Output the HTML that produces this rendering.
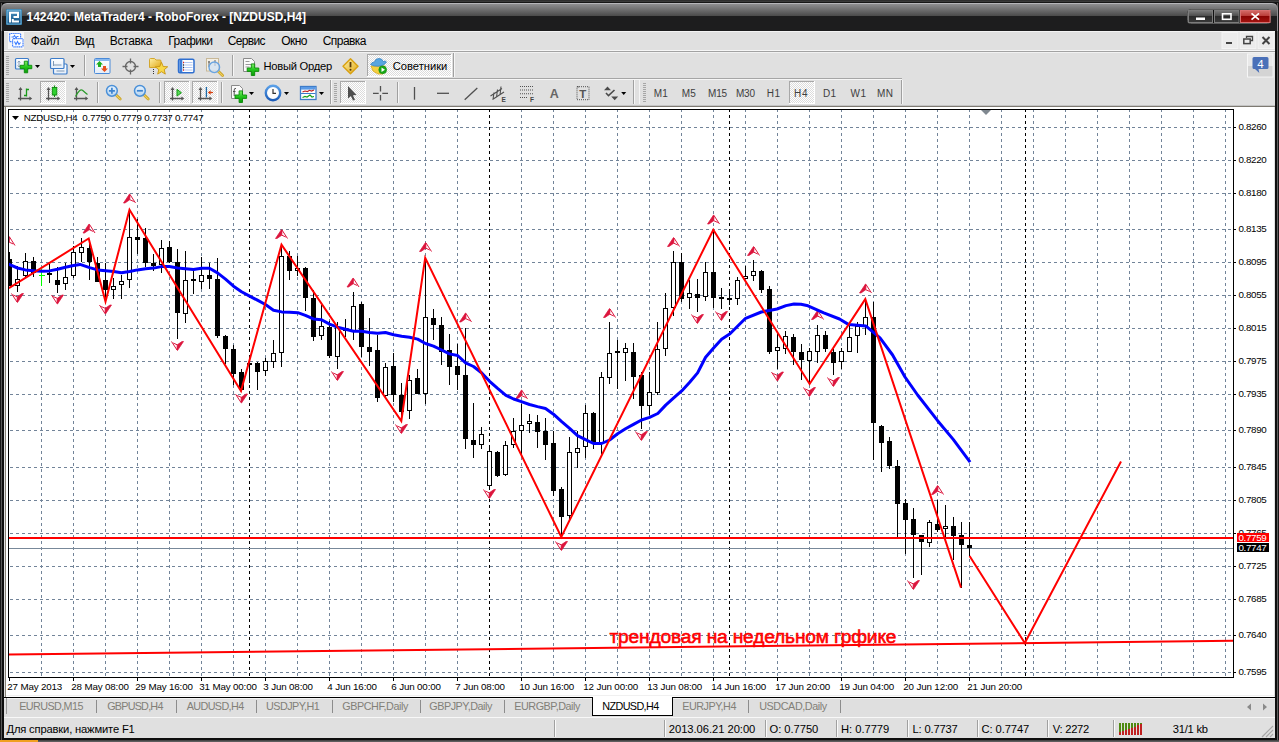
<!DOCTYPE html>
<html lang="ru">
<head>
<meta charset="utf-8">
<title>142420: MetaTrader4 - RoboForex - [NZDUSD,H4]</title>
<style>
*{box-sizing:border-box;margin:0;padding:0}
html,body{width:1279px;height:742px;overflow:hidden;background:#1c1c1c}
body{position:relative;font-family:"Liberation Sans",Arial,sans-serif;font-size:11px;color:#000}
.abs{position:absolute}
#frame{left:0;top:0;width:1279px;height:742px;background:#0e0e0e;box-shadow:inset 1px 0 0 #161616,inset 2px 0 0 #585858,inset -1px 0 0 #161616,inset -2px 0 0 #5e5e5e}
#topedge{left:0;top:0;width:1279px;height:3px;background:linear-gradient(#2e2e2e 0,#2e2e2e 1px,#3a3a3a 1px,#3a3a3a 2px,#161616 2px)}
#botedge{left:0;top:740px;width:1279px;height:2px;background:linear-gradient(#3a3a3a,#6a6a6a)}
#botorange{left:0;top:740px;width:38px;height:2px;background:#f0a020}
#titlebar{left:1px;top:3px;width:1277px;height:28px;border-radius:6px 6px 0 0;border:1px solid #8e8e92;border-top-color:#b6b6ba;border-bottom:none;background:linear-gradient(#8e8e90 0,#4a4a4a 12px,#1d1d1e 12px,#1d1d1e 100%)}
#title{left:27px;top:9px;font-weight:bold;font-size:12.5px;color:#fff;white-space:nowrap;letter-spacing:-0.1px;text-shadow:0 0 2px #000}
#logo{left:7px;top:9px;width:15px;height:15px;background:linear-gradient(#3f86b5,#0d4d7e);border:1px solid #6fa6c8}
.capbtn{top:10px;height:13px;border:1px solid #555;background:linear-gradient(#6a6a6a,#3a3a3a 50%,#2a2a2a 50%,#333)}
#client{left:4px;top:31px;width:1271px;height:707px;background:#e0e0e0}
#menubar{left:4px;top:31px;width:1271px;height:20px;background:#e0e0e0;border-top:1px solid #f4f4f4;border-bottom:1px solid #f6f6f6}
.mi{position:absolute;top:35px;font-size:11.5px;white-space:nowrap}
#tb1{left:4px;top:51px;width:1271px;height:28px;background:#e0e0e0;border-top:1px solid #a2a2a2;box-shadow:inset 0 1px 0 #f2f2f2}
#tb2{left:4px;top:79px;width:1271px;height:26px;background:#e0e0e0}
#tbsep{left:4px;top:78px;width:898px;height:2px;background:#f6f6f6;border-top:1px solid #a6a6a6}
#tbbottom{left:4px;top:105px;width:1271px;height:2px;background:#c4c4c4;border-bottom:1px solid #7e7a72}
.pressed{position:absolute;border:1px solid #fff;border-top-color:#b8b8b8;border-left-color:#b8b8b8;background:#ececec}
.grip{position:absolute;width:3px;height:20px;background:repeating-linear-gradient(#b0b0b0 0,#b0b0b0 1px,transparent 1px,transparent 2px)}
.vsep{position:absolute;width:2px;height:20px;border-left:1px solid #a8a8a8;border-right:1px solid #f4f4f4}
.tf{position:absolute;top:87px;font-size:10.5px;color:#3c3c3c;white-space:nowrap}
.tbt{position:absolute;font-size:11px;white-space:nowrap}
#tabbar{left:4px;top:697px;width:1271px;height:20px;background:#dfdfdf;border-top:1px solid #000;box-shadow:inset 0 1px 0 #f4f4f4}
.tab{position:absolute;top:701px;font-size:10.4px;color:#7b7b7b;white-space:nowrap}
.tsep{position:absolute;top:700px;width:1px;height:13px;background:#8a8a8a}
#acttab{left:592px;top:697px;width:81px;height:19px;background:#fff;border:1px solid #000;border-top:none}
#status{left:4px;top:717px;width:1271px;height:21px;background:#e0e0e0;border-top:1px solid #f8f8f8}
.st{position:absolute;top:722px;font-size:10.4px;white-space:nowrap}
.ssep{position:absolute;top:720px;width:2px;height:17px;border-left:1px solid #a0a0a0;border-right:1px solid #fafafa}
svg{display:block}
</style>
</head>
<body>
<div id="frame" class="abs"></div>
<div id="topedge" class="abs"></div>
<div id="botedge" class="abs"></div>
<div id="botorange" class="abs"></div>
<div id="titlebar" class="abs"></div>
<!--CAPTION-->
<div id="client" class="abs"></div>
<div id="menubar" class="abs"></div>
<!--MENU-->
<div id="tb1" class="abs"></div>
<div id="tb2" class="abs"></div>
<div id="tbsep" class="abs"></div>
<div id="tbbottom" class="abs"></div>
<!--TOOLBAR-->
<svg id="chart" width="1271" height="590" viewBox="4 107 1271 590" shape-rendering="crispEdges" style="position:absolute;left:4px;top:107px">
<rect x="4" y="107" width="1271" height="590" fill="#fff"/>
<g stroke="#728499" stroke-width="1" stroke-dasharray="3 3" fill="none">
<path d="M10 127.5 H1233"/>
<path d="M10 160.5 H1233"/>
<path d="M10 193.5 H1233"/>
<path d="M10 229.5 H1233"/>
<path d="M10 262.5 H1233"/>
<path d="M10 295.5 H1233"/>
<path d="M10 328.5 H1233"/>
<path d="M10 361.5 H1233"/>
<path d="M10 394.5 H1233"/>
<path d="M10 430.5 H1233"/>
<path d="M10 467.5 H1233"/>
<path d="M10 500.5 H1233"/>
<path d="M10 533.5 H1233"/>
<path d="M10 566.5 H1233"/>
<path d="M10 599.5 H1233"/>
<path d="M10 635.5 H1233"/>
<path d="M10 672.5 H1233"/>
<path d="M41.5 109 V677"/>
<path d="M73.5 109 V677"/>
<path d="M105.5 109 V677"/>
<path d="M137.5 109 V677"/>
<path d="M169.5 109 V677"/>
<path d="M201.5 109 V677"/>
<path d="M233.5 109 V677"/>
<path d="M265.5 109 V677"/>
<path d="M297.5 109 V677"/>
<path d="M329.5 109 V677"/>
<path d="M361.5 109 V677"/>
<path d="M393.5 109 V677"/>
<path d="M425.5 109 V677"/>
<path d="M457.5 109 V677"/>
<path d="M489.5 109 V677"/>
<path d="M521.5 109 V677"/>
<path d="M553.5 109 V677"/>
<path d="M585.5 109 V677"/>
<path d="M617.5 109 V677"/>
<path d="M649.5 109 V677"/>
<path d="M681.5 109 V677"/>
<path d="M713.5 109 V677"/>
<path d="M745.5 109 V677"/>
<path d="M777.5 109 V677"/>
<path d="M809.5 109 V677"/>
<path d="M841.5 109 V677"/>
<path d="M873.5 109 V677"/>
<path d="M905.5 109 V677"/>
<path d="M937.5 109 V677"/>
<path d="M969.5 109 V677"/>
<path d="M1001.5 109 V677"/>
<path d="M1033.5 109 V677"/>
<path d="M1065.5 109 V677"/>
<path d="M1097.5 109 V677"/>
<path d="M1129.5 109 V677"/>
<path d="M1161.5 109 V677"/>
<path d="M1193.5 109 V677"/>
<path d="M1225.5 109 V677"/>
</g>
<g stroke="#000" stroke-width="1" stroke-dasharray="3 3" fill="none">
<path d="M249.5 109 V677"/>
<path d="M489.5 109 V677"/>
<path d="M729.5 109 V677"/>
<path d="M1025.5 109 V677"/>
</g>
<path d="M9 548.5 H1233" stroke="#778899" stroke-width="1"/>
<g stroke="#000" stroke-width="1">
<path d="M9.5 252 V286"/>
<rect x="7.5" y="259.5" width="4" height="26" fill="#000"/>
<path d="M17.5 266 V292"/>
<rect x="15.5" y="279.5" width="4" height="6" fill="#fff"/>
<path d="M25.5 253 V277"/>
<rect x="23.5" y="261.5" width="4" height="14" fill="#fff"/>
<path d="M33.5 257 V277"/>
<rect x="31.5" y="261.5" width="4" height="11" fill="#000"/>
<path d="M41.5 269 V286 M38.5 275.5 H44.5" stroke="#00ff00"/>
<path d="M49.5 264 V283"/>
<rect x="47" y="273" width="5" height="2" fill="#000" stroke="none"/>
<path d="M57.5 267 V293"/>
<rect x="55.5" y="280.5" width="4" height="4" fill="#000"/>
<path d="M65.5 263 V290"/>
<rect x="63.5" y="277.5" width="4" height="6" fill="#fff"/>
<path d="M73.5 246 V278"/>
<rect x="71.5" y="252.5" width="4" height="23" fill="#fff"/>
<path d="M81.5 238 V262"/>
<rect x="79.5" y="247.5" width="4" height="5" fill="#fff"/>
<path d="M89.5 239 V280"/>
<rect x="87.5" y="248.5" width="4" height="13" fill="#000"/>
<path d="M97.5 257 V282"/>
<rect x="95.5" y="263.5" width="4" height="18" fill="#000"/>
<path d="M105.5 263 V302"/>
<rect x="103.5" y="280.5" width="4" height="9" fill="#000"/>
<path d="M113.5 278 V299"/>
<rect x="111.5" y="286.5" width="4" height="3" fill="#fff"/>
<path d="M121.5 275 V299"/>
<rect x="119.5" y="281.5" width="4" height="3" fill="#fff"/>
<path d="M129.5 210 V288"/>
<rect x="127.5" y="237.5" width="4" height="42" fill="#fff"/>
<path d="M137.5 219 V254"/>
<rect x="135.5" y="237.5" width="4" height="2" fill="#000"/>
<path d="M145.5 228 V267"/>
<rect x="143.5" y="238.5" width="4" height="24" fill="#000"/>
<path d="M153.5 254 V271"/>
<rect x="151.5" y="263.5" width="4" height="2" fill="#000"/>
<path d="M161.5 240 V273"/>
<rect x="159.5" y="248.5" width="4" height="16" fill="#fff"/>
<path d="M169.5 241 V263"/>
<rect x="167.5" y="247.5" width="4" height="14" fill="#000"/>
<path d="M177.5 249 V339"/>
<rect x="175.5" y="262.5" width="4" height="50" fill="#000"/>
<path d="M185.5 251 V323"/>
<rect x="183.5" y="280.5" width="4" height="33" fill="#fff"/>
<path d="M193.5 268 V294"/>
<rect x="191" y="279" width="5" height="2" fill="#000" stroke="none"/>
<path d="M201.5 257 V289"/>
<rect x="199.5" y="275.5" width="4" height="6" fill="#fff"/>
<path d="M209.5 263 V289"/>
<rect x="207.5" y="275.5" width="4" height="3" fill="#000"/>
<path d="M217.5 258 V338"/>
<rect x="215.5" y="279.5" width="4" height="56" fill="#000"/>
<path d="M225.5 335 V364"/>
<rect x="223.5" y="336.5" width="4" height="12" fill="#000"/>
<path d="M233.5 345 V385"/>
<rect x="231.5" y="349.5" width="4" height="24" fill="#000"/>
<path d="M241.5 369 V391"/>
<rect x="239.5" y="372.5" width="4" height="17" fill="#000"/>
<path d="M249.5 356 V383"/>
<rect x="247" y="363" width="5" height="2" fill="#000" stroke="none"/>
<path d="M257.5 362 V390"/>
<rect x="255.5" y="363.5" width="4" height="8" fill="#000"/>
<path d="M265.5 358 V376"/>
<rect x="263.5" y="361.5" width="4" height="9" fill="#fff"/>
<path d="M273.5 340 V368"/>
<rect x="271.5" y="353.5" width="4" height="8" fill="#fff"/>
<path d="M281.5 245 V367"/>
<rect x="279.5" y="256.5" width="4" height="96" fill="#fff"/>
<path d="M289.5 251 V280"/>
<rect x="287.5" y="256.5" width="4" height="14" fill="#000"/>
<path d="M297.5 256 V276"/>
<rect x="295.5" y="268.5" width="4" height="2" fill="#fff"/>
<path d="M305.5 267 V311"/>
<rect x="303.5" y="268.5" width="4" height="29" fill="#000"/>
<path d="M313.5 290 V341"/>
<rect x="311.5" y="298.5" width="4" height="38" fill="#000"/>
<path d="M321.5 305 V340"/>
<rect x="319.5" y="326.5" width="4" height="9" fill="#fff"/>
<path d="M329.5 321 V358"/>
<rect x="327.5" y="327.5" width="4" height="28" fill="#000"/>
<path d="M337.5 322 V369"/>
<rect x="335.5" y="327.5" width="4" height="29" fill="#fff"/>
<path d="M345.5 319 V337"/>
<rect x="343.5" y="328.5" width="4" height="2" fill="#000"/>
<path d="M353.5 292 V340"/>
<rect x="351.5" y="306.5" width="4" height="24" fill="#fff"/>
<path d="M361.5 302 V357"/>
<rect x="359.5" y="304.5" width="4" height="42" fill="#000"/>
<path d="M369.5 318 V366"/>
<rect x="367.5" y="347.5" width="4" height="4" fill="#000"/>
<path d="M377.5 335 V402"/>
<rect x="375.5" y="350.5" width="4" height="47" fill="#000"/>
<path d="M385.5 363 V397"/>
<rect x="383.5" y="367.5" width="4" height="28" fill="#fff"/>
<path d="M393.5 353 V402"/>
<rect x="391.5" y="366.5" width="4" height="28" fill="#000"/>
<path d="M401.5 383 V421"/>
<rect x="399.5" y="395.5" width="4" height="16" fill="#000"/>
<path d="M409.5 375 V419"/>
<rect x="407.5" y="380.5" width="4" height="30" fill="#fff"/>
<path d="M417.5 369 V394"/>
<rect x="415.5" y="378.5" width="4" height="15" fill="#000"/>
<path d="M425.5 258 V404"/>
<rect x="423.5" y="317.5" width="4" height="76" fill="#fff"/>
<path d="M433.5 309 V340"/>
<rect x="431.5" y="318.5" width="4" height="6" fill="#000"/>
<path d="M441.5 317 V365"/>
<rect x="439.5" y="325.5" width="4" height="26" fill="#000"/>
<path d="M449.5 334 V385"/>
<rect x="447.5" y="350.5" width="4" height="16" fill="#000"/>
<path d="M457.5 344 V390"/>
<rect x="455.5" y="366.5" width="4" height="8" fill="#000"/>
<path d="M465.5 328 V449"/>
<rect x="463.5" y="375.5" width="4" height="63" fill="#000"/>
<path d="M473.5 403 V458"/>
<rect x="471.5" y="440.5" width="4" height="4" fill="#000"/>
<path d="M481.5 427 V449"/>
<rect x="479.5" y="434.5" width="4" height="10" fill="#fff"/>
<path d="M489.5 446 V490"/>
<rect x="487.5" y="451.5" width="4" height="34" fill="#fff"/>
<path d="M497.5 451 V477"/>
<rect x="495.5" y="452.5" width="4" height="23" fill="#000"/>
<path d="M505.5 441 V476"/>
<rect x="503.5" y="445.5" width="4" height="29" fill="#fff"/>
<path d="M513.5 418 V448"/>
<rect x="511.5" y="431.5" width="4" height="13" fill="#fff"/>
<path d="M521.5 404 V454"/>
<rect x="519.5" y="425.5" width="4" height="5" fill="#fff"/>
<path d="M529.5 414 V433"/>
<rect x="527.5" y="421.5" width="4" height="2" fill="#fff"/>
<path d="M537.5 415 V448"/>
<rect x="535.5" y="422.5" width="4" height="9" fill="#000"/>
<path d="M545.5 418 V460"/>
<rect x="543.5" y="431.5" width="4" height="13" fill="#000"/>
<path d="M553.5 431 V496"/>
<rect x="551.5" y="443.5" width="4" height="47" fill="#000"/>
<path d="M561.5 487 V537"/>
<rect x="559.5" y="489.5" width="4" height="27" fill="#000"/>
<path d="M569.5 437 V520"/>
<rect x="567.5" y="452.5" width="4" height="63" fill="#fff"/>
<path d="M577.5 431 V468"/>
<rect x="575.5" y="448.5" width="4" height="4" fill="#fff"/>
<path d="M585.5 405 V458"/>
<rect x="583.5" y="413.5" width="4" height="33" fill="#fff"/>
<path d="M593.5 412 V449"/>
<rect x="591.5" y="413.5" width="4" height="29" fill="#000"/>
<path d="M601.5 372 V454"/>
<rect x="599.5" y="377.5" width="4" height="66" fill="#fff"/>
<path d="M609.5 322 V384"/>
<rect x="607.5" y="353.5" width="4" height="24" fill="#fff"/>
<path d="M617.5 340 V389"/>
<rect x="615" y="351" width="5" height="2" fill="#000" stroke="none"/>
<path d="M625.5 343 V381"/>
<rect x="623.5" y="348.5" width="4" height="4" fill="#fff"/>
<path d="M633.5 343 V399"/>
<rect x="631.5" y="352.5" width="4" height="24" fill="#000"/>
<path d="M641.5 372 V429"/>
<rect x="639.5" y="375.5" width="4" height="30" fill="#000"/>
<path d="M649.5 372 V415"/>
<rect x="647.5" y="392.5" width="4" height="13" fill="#fff"/>
<path d="M657.5 322 V395"/>
<rect x="655.5" y="349.5" width="4" height="43" fill="#fff"/>
<path d="M665.5 293 V356"/>
<rect x="663.5" y="308.5" width="4" height="40" fill="#fff"/>
<path d="M673.5 251 V316"/>
<rect x="671.5" y="262.5" width="4" height="45" fill="#fff"/>
<path d="M681.5 253 V302"/>
<rect x="679.5" y="262.5" width="4" height="36" fill="#000"/>
<path d="M689.5 280 V309"/>
<rect x="687.5" y="293.5" width="4" height="4" fill="#fff"/>
<path d="M697.5 279 V312"/>
<rect x="695.5" y="294.5" width="4" height="3" fill="#000"/>
<path d="M705.5 262 V301"/>
<rect x="703.5" y="272.5" width="4" height="24" fill="#fff"/>
<path d="M713.5 230 V308"/>
<rect x="711.5" y="272.5" width="4" height="25" fill="#000"/>
<path d="M721.5 288 V309"/>
<rect x="719" y="297" width="5" height="2" fill="#000" stroke="none"/>
<path d="M729.5 289 V305"/>
<rect x="727" y="298" width="5" height="2" fill="#000" stroke="none"/>
<path d="M737.5 277 V305"/>
<rect x="735.5" y="280.5" width="4" height="18" fill="#fff"/>
<path d="M745.5 266 V279"/>
<rect x="743.5" y="276.5" width="4" height="2" fill="#fff"/>
<path d="M753.5 260 V281"/>
<rect x="751.5" y="271.5" width="4" height="4" fill="#fff"/>
<path d="M761.5 270 V293"/>
<rect x="759.5" y="271.5" width="4" height="18" fill="#000"/>
<path d="M769.5 286 V354"/>
<rect x="767.5" y="289.5" width="4" height="62" fill="#000"/>
<path d="M777.5 333 V369"/>
<rect x="775.5" y="347.5" width="4" height="3" fill="#fff"/>
<path d="M785.5 331 V354"/>
<rect x="783.5" y="336.5" width="4" height="12" fill="#fff"/>
<path d="M793.5 334 V365"/>
<rect x="791.5" y="337.5" width="4" height="14" fill="#000"/>
<path d="M801.5 344 V380"/>
<rect x="799.5" y="352.5" width="4" height="7" fill="#000"/>
<path d="M809.5 348 V384"/>
<rect x="807.5" y="351.5" width="4" height="9" fill="#fff"/>
<path d="M817.5 325 V363"/>
<rect x="815.5" y="335.5" width="4" height="16" fill="#fff"/>
<path d="M825.5 331 V352"/>
<rect x="823.5" y="335.5" width="4" height="13" fill="#000"/>
<path d="M833.5 349 V375"/>
<rect x="831.5" y="352.5" width="4" height="10" fill="#000"/>
<path d="M841.5 348 V369"/>
<rect x="839.5" y="351.5" width="4" height="10" fill="#fff"/>
<path d="M849.5 325 V352"/>
<rect x="847.5" y="337.5" width="4" height="14" fill="#fff"/>
<path d="M857.5 322 V353"/>
<rect x="855.5" y="326.5" width="4" height="9" fill="#fff"/>
<path d="M865.5 300 V335"/>
<rect x="863.5" y="317.5" width="4" height="8" fill="#fff"/>
<path d="M873.5 302 V460"/>
<rect x="871.5" y="317.5" width="4" height="105" fill="#000"/>
<path d="M881.5 425 V472"/>
<rect x="879.5" y="426.5" width="4" height="16" fill="#000"/>
<path d="M889.5 437 V469"/>
<rect x="887.5" y="441.5" width="4" height="24" fill="#000"/>
<path d="M897.5 460 V537"/>
<rect x="895.5" y="466.5" width="4" height="37" fill="#000"/>
<path d="M905.5 499 V554"/>
<rect x="903.5" y="503.5" width="4" height="16" fill="#000"/>
<path d="M913.5 508 V578"/>
<rect x="911.5" y="519.5" width="4" height="15" fill="#000"/>
<path d="M921.5 535 V575"/>
<rect x="919.5" y="535.5" width="4" height="6" fill="#000"/>
<path d="M929.5 520 V547"/>
<rect x="927.5" y="522.5" width="4" height="20" fill="#fff"/>
<path d="M937.5 500 V532"/>
<rect x="935.5" y="524.5" width="4" height="5" fill="#000"/>
<path d="M945.5 505 V537"/>
<rect x="943.5" y="526.5" width="4" height="2" fill="#fff"/>
<path d="M953.5 517 V560"/>
<rect x="951.5" y="526.5" width="4" height="9" fill="#000"/>
<path d="M961.5 522 V588"/>
<rect x="959.5" y="535.5" width="4" height="9" fill="#000"/>
<path d="M969.5 522 V556"/>
<rect x="967.5" y="545.5" width="4" height="2" fill="#000"/>
</g>
<path d="M9 538 H1233" stroke="#ff0000" stroke-width="2"/>
<g shape-rendering="auto">
<g transform="translate(9 241)"><path d="M0 -4.5 L-6 4.5 L-4.5 4.5 L0.300 1.200 L0.600 -4 Z" fill="#dc143c" stroke="#dc143c" stroke-width="0.700" stroke-linejoin="round"/><path d="M0.500 -4 L6 4.500 M0.300 1.200 L4.300 3" stroke="#dc143c" stroke-width="1" fill="none" shape-rendering="auto"/></g>
<g transform="translate(89 228.5)"><path d="M0 -4.5 L-6 4.5 L-4.5 4.5 L0.300 1.200 L0.600 -4 Z" fill="#dc143c" stroke="#dc143c" stroke-width="0.700" stroke-linejoin="round"/><path d="M0.500 -4 L6 4.500 M0.300 1.200 L4.300 3" stroke="#dc143c" stroke-width="1" fill="none" shape-rendering="auto"/></g>
<g transform="translate(129.5 198.5)"><path d="M0 -4.5 L-6 4.5 L-4.5 4.5 L0.300 1.200 L0.600 -4 Z" fill="#dc143c" stroke="#dc143c" stroke-width="0.700" stroke-linejoin="round"/><path d="M0.500 -4 L6 4.500 M0.300 1.200 L4.300 3" stroke="#dc143c" stroke-width="1" fill="none" shape-rendering="auto"/></g>
<g transform="translate(281.5 234)"><path d="M0 -4.5 L-6 4.5 L-4.5 4.5 L0.300 1.200 L0.600 -4 Z" fill="#dc143c" stroke="#dc143c" stroke-width="0.700" stroke-linejoin="round"/><path d="M0.500 -4 L6 4.500 M0.300 1.200 L4.300 3" stroke="#dc143c" stroke-width="1" fill="none" shape-rendering="auto"/></g>
<g transform="translate(353 282.5)"><path d="M0 -4.5 L-6 4.5 L-4.5 4.5 L0.300 1.200 L0.600 -4 Z" fill="#dc143c" stroke="#dc143c" stroke-width="0.700" stroke-linejoin="round"/><path d="M0.500 -4 L6 4.500 M0.300 1.200 L4.300 3" stroke="#dc143c" stroke-width="1" fill="none" shape-rendering="auto"/></g>
<g transform="translate(425.5 247)"><path d="M0 -4.5 L-6 4.5 L-4.5 4.5 L0.300 1.200 L0.600 -4 Z" fill="#dc143c" stroke="#dc143c" stroke-width="0.700" stroke-linejoin="round"/><path d="M0.500 -4 L6 4.500 M0.300 1.200 L4.300 3" stroke="#dc143c" stroke-width="1" fill="none" shape-rendering="auto"/></g>
<g transform="translate(465.5 317.5)"><path d="M0 -4.5 L-6 4.5 L-4.5 4.5 L0.300 1.200 L0.600 -4 Z" fill="#dc143c" stroke="#dc143c" stroke-width="0.700" stroke-linejoin="round"/><path d="M0.500 -4 L6 4.500 M0.300 1.200 L4.300 3" stroke="#dc143c" stroke-width="1" fill="none" shape-rendering="auto"/></g>
<g transform="translate(521.5 394.5)"><path d="M0 -4.5 L-6 4.5 L-4.5 4.5 L0.300 1.200 L0.600 -4 Z" fill="#dc143c" stroke="#dc143c" stroke-width="0.700" stroke-linejoin="round"/><path d="M0.500 -4 L6 4.500 M0.300 1.200 L4.300 3" stroke="#dc143c" stroke-width="1" fill="none" shape-rendering="auto"/></g>
<g transform="translate(609.5 313)"><path d="M0 -4.5 L-6 4.5 L-4.5 4.5 L0.300 1.200 L0.600 -4 Z" fill="#dc143c" stroke="#dc143c" stroke-width="0.700" stroke-linejoin="round"/><path d="M0.500 -4 L6 4.500 M0.300 1.200 L4.300 3" stroke="#dc143c" stroke-width="1" fill="none" shape-rendering="auto"/></g>
<g transform="translate(673.5 242)"><path d="M0 -4.5 L-6 4.5 L-4.5 4.5 L0.300 1.200 L0.600 -4 Z" fill="#dc143c" stroke="#dc143c" stroke-width="0.700" stroke-linejoin="round"/><path d="M0.500 -4 L6 4.500 M0.300 1.200 L4.300 3" stroke="#dc143c" stroke-width="1" fill="none" shape-rendering="auto"/></g>
<g transform="translate(713.5 219.5)"><path d="M0 -4.5 L-6 4.5 L-4.5 4.5 L0.300 1.200 L0.600 -4 Z" fill="#dc143c" stroke="#dc143c" stroke-width="0.700" stroke-linejoin="round"/><path d="M0.500 -4 L6 4.500 M0.300 1.200 L4.300 3" stroke="#dc143c" stroke-width="1" fill="none" shape-rendering="auto"/></g>
<g transform="translate(753.5 251)"><path d="M0 -4.5 L-6 4.5 L-4.5 4.5 L0.300 1.200 L0.600 -4 Z" fill="#dc143c" stroke="#dc143c" stroke-width="0.700" stroke-linejoin="round"/><path d="M0.500 -4 L6 4.500 M0.300 1.200 L4.300 3" stroke="#dc143c" stroke-width="1" fill="none" shape-rendering="auto"/></g>
<g transform="translate(817.5 315)"><path d="M0 -4.5 L-6 4.5 L-4.5 4.5 L0.300 1.200 L0.600 -4 Z" fill="#dc143c" stroke="#dc143c" stroke-width="0.700" stroke-linejoin="round"/><path d="M0.500 -4 L6 4.500 M0.300 1.200 L4.300 3" stroke="#dc143c" stroke-width="1" fill="none" shape-rendering="auto"/></g>
<g transform="translate(865.5 288.5)"><path d="M0 -4.5 L-6 4.5 L-4.5 4.5 L0.300 1.200 L0.600 -4 Z" fill="#dc143c" stroke="#dc143c" stroke-width="0.700" stroke-linejoin="round"/><path d="M0.500 -4 L6 4.500 M0.300 1.200 L4.300 3" stroke="#dc143c" stroke-width="1" fill="none" shape-rendering="auto"/></g>
<g transform="translate(937.5 490)"><path d="M0 -4.5 L-6 4.5 L-4.5 4.5 L0.300 1.200 L0.600 -4 Z" fill="#dc143c" stroke="#dc143c" stroke-width="0.700" stroke-linejoin="round"/><path d="M0.500 -4 L6 4.500 M0.300 1.200 L4.300 3" stroke="#dc143c" stroke-width="1" fill="none" shape-rendering="auto"/></g>
<g transform="translate(17.5 298) scale(-1 -1)"><path d="M0 -4.5 L-6 4.5 L-4.5 4.5 L0.300 1.200 L0.600 -4 Z" fill="#dc143c" stroke="#dc143c" stroke-width="0.700" stroke-linejoin="round"/><path d="M0.500 -4 L6 4.500 M0.300 1.200 L4.300 3" stroke="#dc143c" stroke-width="1" fill="none" shape-rendering="auto"/></g>
<g transform="translate(57.5 299.5) scale(-1 -1)"><path d="M0 -4.5 L-6 4.5 L-4.5 4.5 L0.300 1.200 L0.600 -4 Z" fill="#dc143c" stroke="#dc143c" stroke-width="0.700" stroke-linejoin="round"/><path d="M0.500 -4 L6 4.500 M0.300 1.200 L4.300 3" stroke="#dc143c" stroke-width="1" fill="none" shape-rendering="auto"/></g>
<g transform="translate(105.5 309.5) scale(-1 -1)"><path d="M0 -4.5 L-6 4.5 L-4.5 4.5 L0.300 1.200 L0.600 -4 Z" fill="#dc143c" stroke="#dc143c" stroke-width="0.700" stroke-linejoin="round"/><path d="M0.500 -4 L6 4.500 M0.300 1.200 L4.300 3" stroke="#dc143c" stroke-width="1" fill="none" shape-rendering="auto"/></g>
<g transform="translate(177.5 346) scale(-1 -1)"><path d="M0 -4.5 L-6 4.5 L-4.5 4.5 L0.300 1.200 L0.600 -4 Z" fill="#dc143c" stroke="#dc143c" stroke-width="0.700" stroke-linejoin="round"/><path d="M0.500 -4 L6 4.500 M0.300 1.200 L4.300 3" stroke="#dc143c" stroke-width="1" fill="none" shape-rendering="auto"/></g>
<g transform="translate(241.5 398.5) scale(-1 -1)"><path d="M0 -4.5 L-6 4.5 L-4.5 4.5 L0.300 1.200 L0.600 -4 Z" fill="#dc143c" stroke="#dc143c" stroke-width="0.700" stroke-linejoin="round"/><path d="M0.500 -4 L6 4.500 M0.300 1.200 L4.300 3" stroke="#dc143c" stroke-width="1" fill="none" shape-rendering="auto"/></g>
<g transform="translate(337.5 376) scale(-1 -1)"><path d="M0 -4.5 L-6 4.5 L-4.5 4.5 L0.300 1.200 L0.600 -4 Z" fill="#dc143c" stroke="#dc143c" stroke-width="0.700" stroke-linejoin="round"/><path d="M0.500 -4 L6 4.500 M0.300 1.200 L4.300 3" stroke="#dc143c" stroke-width="1" fill="none" shape-rendering="auto"/></g>
<g transform="translate(401.5 429) scale(-1 -1)"><path d="M0 -4.5 L-6 4.5 L-4.5 4.5 L0.300 1.200 L0.600 -4 Z" fill="#dc143c" stroke="#dc143c" stroke-width="0.700" stroke-linejoin="round"/><path d="M0.500 -4 L6 4.500 M0.300 1.200 L4.300 3" stroke="#dc143c" stroke-width="1" fill="none" shape-rendering="auto"/></g>
<g transform="translate(489.5 494) scale(-1 -1)"><path d="M0 -4.5 L-6 4.5 L-4.5 4.5 L0.300 1.200 L0.600 -4 Z" fill="#dc143c" stroke="#dc143c" stroke-width="0.700" stroke-linejoin="round"/><path d="M0.500 -4 L6 4.500 M0.300 1.200 L4.300 3" stroke="#dc143c" stroke-width="1" fill="none" shape-rendering="auto"/></g>
<g transform="translate(561.5 546) scale(-1 -1)"><path d="M0 -4.5 L-6 4.5 L-4.5 4.5 L0.300 1.200 L0.600 -4 Z" fill="#dc143c" stroke="#dc143c" stroke-width="0.700" stroke-linejoin="round"/><path d="M0.500 -4 L6 4.500 M0.300 1.200 L4.300 3" stroke="#dc143c" stroke-width="1" fill="none" shape-rendering="auto"/></g>
<g transform="translate(641.5 436) scale(-1 -1)"><path d="M0 -4.5 L-6 4.5 L-4.5 4.5 L0.300 1.200 L0.600 -4 Z" fill="#dc143c" stroke="#dc143c" stroke-width="0.700" stroke-linejoin="round"/><path d="M0.500 -4 L6 4.500 M0.300 1.200 L4.300 3" stroke="#dc143c" stroke-width="1" fill="none" shape-rendering="auto"/></g>
<g transform="translate(697.5 319) scale(-1 -1)"><path d="M0 -4.5 L-6 4.5 L-4.5 4.5 L0.300 1.200 L0.600 -4 Z" fill="#dc143c" stroke="#dc143c" stroke-width="0.700" stroke-linejoin="round"/><path d="M0.500 -4 L6 4.500 M0.300 1.200 L4.300 3" stroke="#dc143c" stroke-width="1" fill="none" shape-rendering="auto"/></g>
<g transform="translate(721.5 316) scale(-1 -1)"><path d="M0 -4.5 L-6 4.5 L-4.5 4.5 L0.300 1.200 L0.600 -4 Z" fill="#dc143c" stroke="#dc143c" stroke-width="0.700" stroke-linejoin="round"/><path d="M0.500 -4 L6 4.500 M0.300 1.200 L4.300 3" stroke="#dc143c" stroke-width="1" fill="none" shape-rendering="auto"/></g>
<g transform="translate(777.5 376.5) scale(-1 -1)"><path d="M0 -4.5 L-6 4.5 L-4.5 4.5 L0.300 1.200 L0.600 -4 Z" fill="#dc143c" stroke="#dc143c" stroke-width="0.700" stroke-linejoin="round"/><path d="M0.500 -4 L6 4.500 M0.300 1.200 L4.300 3" stroke="#dc143c" stroke-width="1" fill="none" shape-rendering="auto"/></g>
<g transform="translate(809.5 392) scale(-1 -1)"><path d="M0 -4.5 L-6 4.5 L-4.5 4.5 L0.300 1.200 L0.600 -4 Z" fill="#dc143c" stroke="#dc143c" stroke-width="0.700" stroke-linejoin="round"/><path d="M0.500 -4 L6 4.500 M0.300 1.200 L4.300 3" stroke="#dc143c" stroke-width="1" fill="none" shape-rendering="auto"/></g>
<g transform="translate(833.5 382) scale(-1 -1)"><path d="M0 -4.5 L-6 4.5 L-4.5 4.5 L0.300 1.200 L0.600 -4 Z" fill="#dc143c" stroke="#dc143c" stroke-width="0.700" stroke-linejoin="round"/><path d="M0.500 -4 L6 4.500 M0.300 1.200 L4.300 3" stroke="#dc143c" stroke-width="1" fill="none" shape-rendering="auto"/></g>
<g transform="translate(913.5 585) scale(-1 -1)"><path d="M0 -4.5 L-6 4.5 L-4.5 4.5 L0.300 1.200 L0.600 -4 Z" fill="#dc143c" stroke="#dc143c" stroke-width="0.700" stroke-linejoin="round"/><path d="M0.500 -4 L6 4.500 M0.300 1.200 L4.300 3" stroke="#dc143c" stroke-width="1" fill="none" shape-rendering="auto"/></g>
</g>
<polyline fill="none" stroke="#0000ff" stroke-width="3" stroke-linejoin="round" shape-rendering="auto" points="8,264 9.7,264.7 17.5,268 25.4,269.9 33.5,270.7 41.6,271.2 49.5,270.9 57.6,269.3 65.5,267.2 73.6,265.5 80,264.4 89.6,267.6 97.6,269.9 105.7,270.7 113.6,271.5 121.5,272.8 129.6,271.5 137.5,269.9 145.6,268.8 153.5,268.1 161.4,266.6 169.4,266.6 177.5,267.9 185.6,268.7 193.5,269.4 201.6,268.2 209.4,268.2 217.5,272.9 225.5,279.1 233.5,286.2 241.5,291.8 249.6,296.1 257.4,300.2 265.4,304.5 273.5,310.3 281.7,311.9 289.6,312.2 297.8,312.7 305.4,315.3 313.4,318.9 321.5,319.7 329.5,324.1 337.5,327.2 345.5,329.2 353.4,331.3 361.6,331.3 369.6,332.5 377.5,333.3 385.5,332.5 393.6,334.7 401.6,336.3 409.6,337.2 417.6,339.1 425.5,343.5 433.5,346.1 441.6,350 449.5,353.9 457.6,355.5 465.6,362.9 473.5,366.5 481.5,372.7 489.6,381.3 497.6,388.4 505.6,395.1 513.6,399 521.4,401.6 529.5,404.5 537.5,406.6 545.5,408.5 553.5,414.2 561.4,421.3 569.6,428.3 577.5,435.7 585.5,439.7 593.5,443.5 601.6,443.5 609.6,440 617.6,433.8 625.5,428.8 633.5,424.4 641.5,420 649.6,417.4 657.8,413.5 665.7,405.1 673.7,397.9 681.7,390.9 689.7,382.3 697.6,372.9 705.6,357.2 713.6,347.9 721.6,339.3 730,333.8 745.6,318.3 761.3,312 777,309 786,305.6 794,304 801,304.3 808,305.8 823.8,312.8 839.5,319 848.8,324.6 866,326.1 880,337.9 892.6,355 905,377 917.6,395 937.6,420.7 953.2,439.4 970.1,462.1"/>
<polyline fill="none" stroke="#ff0000" stroke-width="2" stroke-linejoin="miter" shape-rendering="auto" points="8.9,288.2 88.7,238.5 105.5,301.6 129.5,209.7 241,390.9 281.5,244.7 401.3,421 425.2,257.8 561.3,537 713.3,229.7 809.6,384 865.3,299.1 961,587.6"/>
<polyline fill="none" stroke="#ff0000" stroke-width="2" shape-rendering="auto" points="969.6,556 1024.8,643 1121,461.5"/>
<path d="M9 654.6 L1233 640.7" stroke="#ff0000" stroke-width="2" shape-rendering="auto"/>
<text x="609.5" y="643.2" font-family="Liberation Sans, Arial, sans-serif" font-size="19.2" fill="#ff0000" stroke="#ff0000" stroke-width="0.55" textLength="287" lengthAdjust="spacing" shape-rendering="auto">трендовая на недельном грфике</text>
<rect x="4" y="107" width="4" height="590" fill="#fff"/>
<rect x="1234" y="107" width="41" height="590" fill="#fff"/>
<rect x="4" y="678" width="1271" height="19" fill="#fff"/>
<rect x="4" y="107" width="1" height="590" fill="#e0e0e0"/><rect x="5" y="107" width="1" height="590" fill="#868278"/><rect x="1274" y="107" width="1" height="590" fill="#e0e0e0"/><rect x="6" y="695" width="1268" height="1" fill="#f0f0f0"/>
<path d="M8.5 109.5 H1233.5 V677.5 H8.5 Z" fill="none" stroke="#000" stroke-width="1"/>
<g stroke="#000" stroke-width="1">
<path d="M1234 127.5 H1236"/>
<path d="M1234 160.5 H1236"/>
<path d="M1234 193.5 H1236"/>
<path d="M1234 229.5 H1236"/>
<path d="M1234 262.5 H1236"/>
<path d="M1234 295.5 H1236"/>
<path d="M1234 328.5 H1236"/>
<path d="M1234 361.5 H1236"/>
<path d="M1234 394.5 H1236"/>
<path d="M1234 430.5 H1236"/>
<path d="M1234 467.5 H1236"/>
<path d="M1234 500.5 H1236"/>
<path d="M1234 533.5 H1236"/>
<path d="M1234 566.5 H1236"/>
<path d="M1234 599.5 H1236"/>
<path d="M1234 635.5 H1236"/>
<path d="M1234 672.5 H1236"/>
<path d="M9.5 678 V681"/>
<path d="M73.5 678 V681"/>
<path d="M137.5 678 V681"/>
<path d="M201.5 678 V681"/>
<path d="M265.5 678 V681"/>
<path d="M329.5 678 V681"/>
<path d="M393.5 678 V681"/>
<path d="M457.5 678 V681"/>
<path d="M521.5 678 V681"/>
<path d="M585.5 678 V681"/>
<path d="M649.5 678 V681"/>
<path d="M713.5 678 V681"/>
<path d="M777.5 678 V681"/>
<path d="M841.5 678 V681"/>
<path d="M905.5 678 V681"/>
<path d="M969.5 678 V681"/>
</g>
<g font-family="Liberation Sans, Arial, sans-serif" font-size="9.8" fill="#000" shape-rendering="auto">
<text x="1238.5" y="130" textLength="28.3" lengthAdjust="spacing">0.8260</text>
<text x="1238.5" y="163" textLength="28.3" lengthAdjust="spacing">0.8220</text>
<text x="1238.5" y="196" textLength="28.3" lengthAdjust="spacing">0.8180</text>
<text x="1238.5" y="232" textLength="28.3" lengthAdjust="spacing">0.8135</text>
<text x="1238.5" y="265" textLength="28.3" lengthAdjust="spacing">0.8095</text>
<text x="1238.5" y="298" textLength="28.3" lengthAdjust="spacing">0.8055</text>
<text x="1238.5" y="331" textLength="28.3" lengthAdjust="spacing">0.8015</text>
<text x="1238.5" y="364" textLength="28.3" lengthAdjust="spacing">0.7975</text>
<text x="1238.5" y="397" textLength="28.3" lengthAdjust="spacing">0.7935</text>
<text x="1238.5" y="433" textLength="28.3" lengthAdjust="spacing">0.7890</text>
<text x="1238.5" y="470" textLength="28.3" lengthAdjust="spacing">0.7845</text>
<text x="1238.5" y="503" textLength="28.3" lengthAdjust="spacing">0.7805</text>
<text x="1238.5" y="536" clip-path="url(#c7765)" textLength="28.3" lengthAdjust="spacing">0.7765</text>
<text x="1238.5" y="569" textLength="28.3" lengthAdjust="spacing">0.7725</text>
<text x="1238.5" y="602" textLength="28.3" lengthAdjust="spacing">0.7685</text>
<text x="1238.5" y="638" textLength="28.3" lengthAdjust="spacing">0.7640</text>
<text x="1238.5" y="675" textLength="28.3" lengthAdjust="spacing">0.7595</text>
<text x="7.3" y="690" textLength="54.92" lengthAdjust="spacing">27 May 2013</text>
<text x="71.3" y="690" textLength="57.56" lengthAdjust="spacing">28 May 08:00</text>
<text x="135.3" y="690" textLength="57.56" lengthAdjust="spacing">29 May 16:00</text>
<text x="199.3" y="690" textLength="57.56" lengthAdjust="spacing">31 May 00:00</text>
<text x="263.3" y="690" textLength="49.65" lengthAdjust="spacing">3 Jun 08:00</text>
<text x="327.3" y="690" textLength="49.65" lengthAdjust="spacing">4 Jun 16:00</text>
<text x="391.3" y="690" textLength="49.65" lengthAdjust="spacing">6 Jun 00:00</text>
<text x="455.3" y="690" textLength="49.65" lengthAdjust="spacing">7 Jun 08:00</text>
<text x="519.3" y="690" textLength="54.93" lengthAdjust="spacing">10 Jun 16:00</text>
<text x="583.3" y="690" textLength="54.93" lengthAdjust="spacing">12 Jun 00:00</text>
<text x="647.3" y="690" textLength="54.93" lengthAdjust="spacing">13 Jun 08:00</text>
<text x="711.3" y="690" textLength="54.93" lengthAdjust="spacing">14 Jun 16:00</text>
<text x="775.3" y="690" textLength="54.93" lengthAdjust="spacing">17 Jun 20:00</text>
<text x="839.3" y="690" textLength="54.93" lengthAdjust="spacing">19 Jun 04:00</text>
<text x="903.3" y="690" textLength="54.93" lengthAdjust="spacing">20 Jun 12:00</text>
<text x="967.3" y="690" textLength="54.93" lengthAdjust="spacing">21 Jun 20:00</text>
<text x="23.7" y="121" xml:space="preserve" textLength="180" lengthAdjust="spacing">NZDUSD,H4  0.7750 0.7779 0.7737 0.7747</text>
</g>
<defs><clipPath id="c7765"><rect x="1236" y="525" width="40" height="8.5"/></clipPath></defs>
<rect x="1237" y="533" width="32" height="9" fill="#ff0000"/>
<rect x="1237" y="543" width="32" height="9" fill="#000"/>
<g font-family="Liberation Sans, Arial, sans-serif" font-size="9.8" fill="#fff" shape-rendering="auto"><text x="1238.5" y="541" textLength="28.3" lengthAdjust="spacing">0.7759</text><text x="1238.5" y="551" textLength="28.3" lengthAdjust="spacing">0.7747</text></g>
<path d="M12 116 H19 L15.5 120 Z" fill="#000" shape-rendering="auto"/>
<path d="M981 110 H991 L986 115 Z" fill="#808890" shape-rendering="auto"/>
</svg>
<div id="tabbar" class="abs"></div>
<div id="acttab" class="abs"></div>
<!--TABS-->
<div id="status" class="abs"></div>
<svg id="ui" width="1279" height="742" viewBox="0 0 1279 742" style="position:absolute;left:0;top:0" font-family='"Liberation Sans", Arial, sans-serif'>
<defs>
<linearGradient id="gPlus" x1="0" y1="0" x2="0" y2="1"><stop offset="0" stop-color="#7dee6a"/><stop offset="0.5" stop-color="#22c61c"/><stop offset="1" stop-color="#0c9a0a"/></linearGradient>
<linearGradient id="gWin" x1="0" y1="0" x2="0" y2="1"><stop offset="0" stop-color="#ffffff"/><stop offset="1" stop-color="#e4edf8"/></linearGradient>
<linearGradient id="gGold" x1="0" y1="0" x2="1" y2="1"><stop offset="0" stop-color="#fff2a8"/><stop offset="1" stop-color="#e0a818"/></linearGradient>
<linearGradient id="gLens" x1="0" y1="0" x2="0" y2="1"><stop offset="0" stop-color="#eaf4fd"/><stop offset="1" stop-color="#b5d4f0"/></linearGradient>
<linearGradient id="gBlue" x1="0" y1="0" x2="0" y2="1"><stop offset="0" stop-color="#5aa0e8"/><stop offset="1" stop-color="#1c5cb8"/></linearGradient>
<linearGradient id="gCap" x1="0" y1="0" x2="0" y2="1"><stop offset="0" stop-color="#7b7b7b"/><stop offset="0.48" stop-color="#4a4a4a"/><stop offset="0.5" stop-color="#2b2b2b"/><stop offset="1" stop-color="#3a3a3a"/></linearGradient>
<linearGradient id="gClose" x1="0" y1="0" x2="0" y2="1"><stop offset="0" stop-color="#d46a66"/><stop offset="0.48" stop-color="#b83a36"/><stop offset="0.5" stop-color="#8a0402"/><stop offset="1" stop-color="#a41410"/></linearGradient>
<linearGradient id="gLogo" x1="0" y1="0" x2="0" y2="1"><stop offset="0" stop-color="#4f95c2"/><stop offset="1" stop-color="#0e4f82"/></linearGradient>
<pattern id="dith" width="2" height="2" patternUnits="userSpaceOnUse"><rect width="2" height="2" fill="#ffffff"/><rect width="1" height="1" fill="#dcdcdc"/><rect x="1" y="1" width="1" height="1" fill="#dcdcdc"/></pattern>
<g id="dd"><path d="M0 0 H5 L2.5 3 Z" fill="#000"/></g>
<g id="plus"><path d="M4.300 0.200 H7.700 V4.300 H11.800 V7.700 H7.700 V11.800 H4.300 V7.700 H0.200 V4.300 H4.300 Z" fill="url(#gPlus)" stroke="#0a8a08" stroke-width="0.900"/></g>
<g id="axes"><path d="M2.5 13.6 V1.5 M0 11.5 H12.5" stroke="#555" stroke-width="1.3" fill="none"/><path d="M2.5 0 L4.5 3 H0.5 Z M14.2 11.5 L11.4 9.5 V13.5 Z" fill="#555"/></g>
<g id="lens"><path d="M4 4 L8.3 8.3" stroke="#c8a020" stroke-width="2.8" stroke-linecap="round"/><path d="M4 4 L8.3 8.3" stroke="#f0d060" stroke-width="1.2" stroke-linecap="round"/><circle cx="0" cy="0" r="5.4" fill="url(#gLens)" stroke="#4a90d8" stroke-width="1.5"/></g>
</defs>
<rect x="6" y="9" width="16" height="16" rx="1" fill="#1a6a9c"/><rect x="7" y="10" width="14" height="14" fill="url(#gLogo)" stroke="#8cc6e6" stroke-width="0.800"/>
<path d="M10 22.500 V12.800 H18 V17 H13.500 M12.800 19 V21.600 H19" fill="none" stroke="#fff" stroke-width="2"/>
<text x="26.5" y="21" font-size="12" fill="#fff" font-weight="bold" textLength="279.5" lengthAdjust="spacing">142420: MetaTrader4 - RoboForex - [NZDUSD,H4]</text>
<rect x="1187.5" y="9.5" width="83" height="14" rx="3" fill="#111" stroke="#5a5a5a" stroke-width="1"/>
<rect x="1188.500" y="10.500" width="24" height="12" fill="url(#gCap)" stroke="#7c7c7c" stroke-width="1"/>
<rect x="1214.500" y="10.500" width="24.500" height="12" fill="url(#gCap)" stroke="#7c7c7c" stroke-width="1"/>
<rect x="1240.500" y="10.500" width="29.500" height="12" fill="url(#gClose)" stroke="#d87070" stroke-width="1"/>
<rect x="1196" y="17.5" width="9" height="2.5" fill="#fff"/>
<rect x="1222.5" y="13.8" width="8.5" height="5.5" fill="none" stroke="#fff" stroke-width="1.6"/>
<path d="M1251.500 13.300 L1259 19.700 M1259 13.300 L1251.500 19.700" stroke="#fff" stroke-width="1.700"/>
<rect x="8" y="32" width="16" height="17" fill="#f6f6f6"/>
<g fill="#fff" stroke="#3f7fff" stroke-width="1.2" stroke-dasharray="1.4 0.5"><rect x="9.600" y="33.500" width="11" height="8.200" rx="1"/><rect x="12.600" y="38.600" width="10.400" height="8.200" rx="1"/></g>
<path d="M11.500 37 h2 l1 -1.500 l1.500 2.500 l1 -1.500 h1.500 M14.500 41.500 L16 44.500 L17.500 41.500 L19 44.500 L20.500 42.500" stroke="#3f7fff" fill="none" stroke-width="1.100"/>
<text x="30.7" y="45" font-size="12" fill="#000" textLength="28.8" lengthAdjust="spacing">Файл</text>
<text x="74.7" y="45" font-size="12" fill="#000" textLength="19.8" lengthAdjust="spacing">Вид</text>
<text x="109.7" y="45" font-size="12" fill="#000" textLength="42.8" lengthAdjust="spacing">Вставка</text>
<text x="168.2" y="45" font-size="12" fill="#000" textLength="44.8" lengthAdjust="spacing">Графики</text>
<text x="227.7" y="45" font-size="12" fill="#000" textLength="37.8" lengthAdjust="spacing">Сервис</text>
<text x="281.2" y="45" font-size="12" fill="#000" textLength="26.3" lengthAdjust="spacing">Окно</text>
<text x="322.7" y="45" font-size="12" fill="#000" textLength="43.8" lengthAdjust="spacing">Справка</text>
<rect x="1222" y="32.5" width="16" height="16" fill="#ececec" stroke="#f4f4f4" stroke-width="1"/>
<rect x="1240" y="32.5" width="16" height="16" fill="#ececec" stroke="#f4f4f4" stroke-width="1"/>
<rect x="1258" y="32.5" width="16" height="16" fill="#ececec" stroke="#f4f4f4" stroke-width="1"/>
<rect x="1226" y="42" width="6" height="2" fill="#444"/>
<path d="M1246.5 38 V36.5 H1252.5 V40.5 H1251" fill="none" stroke="#444" stroke-width="1.3"/><rect x="1243.8" y="39" width="6.4" height="4.6" fill="none" stroke="#444" stroke-width="1.5"/>
<path d="M1262.5 37 L1269.5 44 M1269.5 37 L1262.5 44" stroke="#444" stroke-width="2"/>
<path d="M6 56.5 H9 M6 58.5 H9 M6 60.5 H9 M6 62.5 H9 M6 64.5 H9 M6 66.5 H9 M6 68.5 H9 M6 70.5 H9 M6 72.5 H9 M6 74.5 H9 " stroke="#a6a6a6" stroke-width="1" shape-rendering="crispEdges"/>
<rect x="15.5" y="58.5" width="13" height="10.5" rx="1" fill="url(#gWin)" stroke="#3d7cc9" stroke-width="1.2"/><path d="M19 61 V67 M17.6 62.4 L19 61 L20.4 62.4 M17.6 65.6 L19 67 L20.4 65.6" stroke="#8aa0b8" fill="none" stroke-width="1"/>
<use href="#plus" x="20" y="61"/>
<use href="#dd" x="35" y="65"/>
<rect x="53.5" y="64" width="13.5" height="10" rx="1" fill="url(#gWin)" stroke="#3d7cc9" stroke-width="1.2"/>
<rect x="50.5" y="58.5" width="13.5" height="10" rx="1" fill="url(#gWin)" stroke="#3d7cc9" stroke-width="1.2"/>
<path d="M53.5 61 V66 M53.5 65 H61.5 M56.5 71 H64.5" stroke="#7f98b4" fill="none" stroke-width="1"/>
<use href="#dd" x="70" y="65"/>
<path d="M84 55 V76" stroke="#a0a0a0" stroke-width="1" shape-rendering="crispEdges"/><path d="M85 55 V76" stroke="#f6f6f6" stroke-width="1" shape-rendering="crispEdges"/>
<rect x="94.5" y="58.5" width="15.5" height="15" rx="1" fill="url(#gWin)" stroke="#4a8ad8" stroke-width="1"/><path d="M95 60 H109.5" stroke="#6aa6ea" stroke-width="1.6"/>
<path d="M99.5 61 L103 64.5 H101 V67 H98 V64.5 H96 Z" fill="#1fae1f"/><path d="M104.5 72 L101 68.5 H103 V66 H106 V68.5 H108 Z" fill="#e8501c"/>
<g stroke="#666" fill="none" stroke-width="1.300"><circle cx="130.5" cy="66.5" r="5"/><path d="M130.5 58.5 V63.5 M130.5 69.5 V74.5 M122.5 66.5 H127.5 M133.5 66.5 H138.5"/></g>
<path d="M149.5 59.5 q0 -1 1 -1 h4 l1.5 1.5 h4 q1 0 1 1 v6.5 h-11.5 Z" fill="url(#gGold)" stroke="#d0a020" stroke-width="0.9"/>
<path d="M161.5 62.3 l1.7 4.2 4.5 0.3 -3.5 2.9 1.1 4.4 -3.8 -2.4 -3.8 2.4 1.1 -4.4 -3.5 -2.9 4.5 -0.3 Z" fill="#f8d848" stroke="#c89410" stroke-width="0.9"/>
<path d="M153.5 69 V75" stroke="#333" stroke-width="1" stroke-dasharray="1 1"/>
<rect x="178.5" y="59.3" width="15.5" height="13.5" rx="1.5" fill="#fff" stroke="#2f6fd0" stroke-width="1.5"/><rect x="179.3" y="60" width="3" height="12" fill="#3c7cd8"/>
<path d="M184 62.5 H192.5 M184 65 H192.5 M184 67.5 H192.5 M184 70 H192.5" stroke="#9cb8f0" stroke-width="0.8"/><path d="M183 62.5 h1 M183 70 h1" stroke="#e02020" stroke-width="1.3"/><path d="M183 65 h1 M183 67.5 h1" stroke="#333" stroke-width="1.3"/>
<rect x="206.5" y="58.5" width="12" height="12.5" fill="#f4efe4" stroke="#c8b898" stroke-width="1"/><path d="M209 61 V67 M208 62 h2 M215 60 V66" stroke="#666" stroke-width="1"/>
<g transform="translate(214.300 67.300)"><path d="M4 4 L8.300 8.300" stroke="#c8a020" stroke-width="2.800" stroke-linecap="round"/><path d="M4 4 L8.300 8.300" stroke="#f0d060" stroke-width="1.200" stroke-linecap="round"/><circle cx="0" cy="0" r="5.300" fill="#cfe2f6" fill-opacity="0.700" stroke="#6aa4e0" stroke-width="1.400"/></g>
<path d="M232 55 V76" stroke="#a0a0a0" stroke-width="1" shape-rendering="crispEdges"/><path d="M233 55 V76" stroke="#f6f6f6" stroke-width="1" shape-rendering="crispEdges"/>
<path d="M243.5 58.5 H251.5 L254.5 61.5 V71.5 H243.5 Z" fill="#fafafa" stroke="#8a8a8a" stroke-width="1"/><path d="M245.5 61.5 h4 M245.5 64.5 h6 M245.5 67 h4" stroke="#999" stroke-width="1.2"/>
<use href="#plus" x="247" y="63.7"/>
<text x="263.5" y="70" font-size="11.2" fill="#000" textLength="68.7" lengthAdjust="spacing">Новый Ордер</text>
<path d="M350.5 58.7 L358 66.2 L350.5 73.7 L343 66.2 Z" fill="url(#gGold)" stroke="#d8a010" stroke-width="1.4" stroke-linejoin="round"/><path d="M350.5 62 V67.3" stroke="#5a3a08" stroke-width="1.8"/><circle cx="350.5" cy="69.8" r="1" fill="#5a3a08"/>
<rect x="367" y="54" width="84.5" height="22.5" fill="url(#dith)" shape-rendering="crispEdges"/><path d="M367.5 76.5 V54.5 H451.5" fill="none" stroke="#a8a8a8" stroke-width="1" shape-rendering="crispEdges"/><path d="M451 54 V76 H367" fill="none" stroke="#ffffff" stroke-width="1" shape-rendering="crispEdges"/>
<path d="M371 66 L373 71 L378 74 H383 L385 66 Z" fill="#f4d040" stroke="#d8a820" stroke-width="0.8"/><path d="M370.5 64.5 q1 -2.5 4 -2.5 q0.5 -3.5 4.5 -3.5 q3.5 0 4 3 q3 -1 3.5 0.5 q-2 4 -8 4.2 q-5 0.3 -8 -1.7 Z" fill="#58a6e0" stroke="#3a84c4" stroke-width="0.8"/><circle cx="382.7" cy="69.8" r="3.9" fill="#18a818" stroke="#0c8a0c" stroke-width="0.6"/><path d="M381.5 67.6 L385 69.8 L381.5 72 Z" fill="#fff"/>
<text x="392.8" y="70" font-size="11.2" fill="#000" textLength="54.5" lengthAdjust="spacing">Советники</text>
<path d="M453 53 V77" stroke="#a0a0a0" stroke-width="1" shape-rendering="crispEdges"/><path d="M454 53 V77" stroke="#f6f6f6" stroke-width="1" shape-rendering="crispEdges"/>
<rect x="1247.5" y="54" width="25.5" height="23" fill="#e9e9e9" stroke="#f6f6f6" stroke-width="1"/><rect x="1248" y="66" width="24.5" height="10.5" fill="#d4d4d4"/>
<path d="M1252.5 58.5 q0 -1.5 1.5 -1.5 h13 q1.5 0 1.5 1.5 v9 q0 1.500 -1.5 1.5 h-8.500 l0.8 4 l-4.300 -4 h-1 q-1.500 0 -1.500 -1.5 Z" fill="#4a70b8"/>
<text x="1257.2" y="68" font-size="11.5" fill="#fff">4</text>
<path d="M6 83.5 H9 M6 85.5 H9 M6 87.5 H9 M6 89.5 H9 M6 91.5 H9 M6 93.5 H9 M6 95.5 H9 M6 97.5 H9 M6 99.5 H9 M6 101.5 H9 " stroke="#a6a6a6" stroke-width="1" shape-rendering="crispEdges"/>
<use href="#axes" x="18" y="87"/><path d="M26.5 88.5 V96.5 M26.5 89.5 h2.500 M24 95.500 h2.500" stroke="#1a9a1a" stroke-width="1.3" fill="none"/>
<rect x="40" y="81" width="26" height="23" fill="url(#dith)" shape-rendering="crispEdges"/><path d="M40.5 104 V81.5 H66" fill="none" stroke="#a8a8a8" stroke-width="1" shape-rendering="crispEdges"/><path d="M65.5 81 V103.5 H40" fill="none" stroke="#ffffff" stroke-width="1" shape-rendering="crispEdges"/>
<use href="#axes" x="46" y="87"/><path d="M54.5 85.5 V97" stroke="#0f8a0f" stroke-width="1.2"/><rect x="52.3" y="87.500" width="4.500" height="7.500" fill="#2fd02f" stroke="#0f8a0f" stroke-width="0.9"/>
<use href="#axes" x="74" y="87"/><path d="M75.500 96.500 Q80 88 82.500 90.300 T87.500 94.500" stroke="#2a9a2a" stroke-width="1.200" fill="none"/>
<path d="M97 82 V103" stroke="#a0a0a0" stroke-width="1" shape-rendering="crispEdges"/><path d="M98 82 V103" stroke="#f6f6f6" stroke-width="1" shape-rendering="crispEdges"/>
<use href="#lens" x="111.9" y="90.8"/><path d="M108.900 90.800 h6 M111.900 87.800 v6" stroke="#3d84d0" stroke-width="1.700"/>
<use href="#lens" x="139.9" y="90.8"/><path d="M136.900 90.800 h6" stroke="#3d84d0" stroke-width="1.700"/>
<path d="M159 82 V103" stroke="#a0a0a0" stroke-width="1" shape-rendering="crispEdges"/><path d="M160 82 V103" stroke="#f6f6f6" stroke-width="1" shape-rendering="crispEdges"/>
<rect x="164" y="81" width="25.5" height="23" fill="url(#dith)" shape-rendering="crispEdges"/><path d="M164.5 104 V81.5 H189.5" fill="none" stroke="#a8a8a8" stroke-width="1" shape-rendering="crispEdges"/><path d="M189 81 V103.5 H164" fill="none" stroke="#ffffff" stroke-width="1" shape-rendering="crispEdges"/>
<use href="#axes" x="170" y="87"/><path d="M177 89.300 L181.400 92.700 L177 96.100 Z" fill="#58d858" stroke="#129a12" stroke-width="1"/>
<rect x="192" y="81" width="25.5" height="23" fill="url(#dith)" shape-rendering="crispEdges"/><path d="M192.5 104 V81.5 H217.5" fill="none" stroke="#a8a8a8" stroke-width="1" shape-rendering="crispEdges"/><path d="M217 81 V103.5 H192" fill="none" stroke="#ffffff" stroke-width="1" shape-rendering="crispEdges"/>
<use href="#axes" x="198" y="87"/><path d="M206.400 87 V97.500" stroke="#1c6aa8" stroke-width="1.300"/><path d="M207.800 92.500 L210.600 90.300 V94.700 Z" fill="#d84010"/><path d="M209 92.500 H213" stroke="#d84010" stroke-width="1.200"/>
<path d="M221 82 V103" stroke="#a0a0a0" stroke-width="1" shape-rendering="crispEdges"/><path d="M222 82 V103" stroke="#f6f6f6" stroke-width="1" shape-rendering="crispEdges"/>
<path d="M231.500 85.500 H239.500 L242.500 88.500 V98.500 H231.500 Z" fill="#fafafa" stroke="#8a8a8a" stroke-width="1"/><path d="M236 88.500 q-1.800 -0.500 -1.800 1.500 V96 M233 91.500 h2.500" stroke="#555" stroke-width="1" fill="none"/>
<use href="#plus" x="234.800" y="90.700"/>
<use href="#dd" x="249" y="92"/>
<circle cx="273" cy="93" r="7.200" fill="#fdfdfd" stroke="url(#gBlue)" stroke-width="2.400"/><path d="M273 89 V93.300 H276" stroke="#333" stroke-width="1.200" fill="none"/>
<use href="#dd" x="284" y="92"/>
<rect x="300.500" y="86.500" width="15.500" height="13" fill="#fff" stroke="#3d7cc9" stroke-width="1.300"/><rect x="301" y="87" width="14.500" height="2.600" fill="#5a9ae6"/><path d="M301 93.500 H315.500" stroke="#3d7cc9" stroke-width="1"/>
<path d="M302.500 92 L305 91 L307.500 91.500 L309.500 90.300 L311.500 91 L314 90" stroke="#c02020" stroke-width="1.200" fill="none"/><path d="M302.500 97.500 L305 96.500 L307 97 L310 95 L312 97 L314 96.500" stroke="#18a018" stroke-width="1.200" fill="none"/>
<use href="#dd" x="319" y="92"/>
<path d="M330 80 V104" stroke="#a0a0a0" stroke-width="1" shape-rendering="crispEdges"/><path d="M331 80 V104" stroke="#f6f6f6" stroke-width="1" shape-rendering="crispEdges"/>
<path d="M334 83.5 H337 M334 85.5 H337 M334 87.5 H337 M334 89.5 H337 M334 91.5 H337 M334 93.5 H337 M334 95.5 H337 M334 97.5 H337 M334 99.5 H337 M334 101.5 H337 " stroke="#a6a6a6" stroke-width="1" shape-rendering="crispEdges"/>
<rect x="340" y="81" width="25.5" height="23" fill="url(#dith)" shape-rendering="crispEdges"/><path d="M340.5 104 V81.5 H365.5" fill="none" stroke="#a8a8a8" stroke-width="1" shape-rendering="crispEdges"/><path d="M365 81 V103.5 H340" fill="none" stroke="#ffffff" stroke-width="1" shape-rendering="crispEdges"/>
<path d="M348 86 V98.500 L350.900 96 L353 100.600 L355 99.700 L352.900 95.200 L356.500 94.900 Z" fill="#4e4e4e"/>
<path d="M380.500 86 V91.500 M380.500 95 V100.500 M373 93.300 H378.700 M382.300 93.300 H388" stroke="#505050" stroke-width="1.300"/>
<path d="M397 82 V103" stroke="#a0a0a0" stroke-width="1" shape-rendering="crispEdges"/><path d="M398 82 V103" stroke="#f6f6f6" stroke-width="1" shape-rendering="crispEdges"/>
<path d="M414.500 87 V99.700" stroke="#505050" stroke-width="1.300"/>
<path d="M437 93.300 H449" stroke="#505050" stroke-width="1.300"/>
<path d="M464.700 99.700 L477.300 88" stroke="#505050" stroke-width="1.300"/>
<path d="M490.500 96 L502 88.500 M492.500 99.500 L504 92 M494 92.500 L493 99.500 M497.500 89.500 L496.500 97.500 M501 86.500 L500 95" stroke="#505050" stroke-width="1.100" fill="none"/>
<text x="501.5" y="102" font-size="6.5" fill="#444" font-weight="bold">E</text>
<path d="M520 86.500 H533 M520 90 H533 M520 93.700 H533 M520 97.500 H528" stroke="#505050" stroke-width="1.100" stroke-dasharray="1 1"/>
<text x="530" y="102" font-size="6.5" fill="#444" font-weight="bold">F</text>
<text x="549.7" y="98" font-size="12.5" fill="#666" font-weight="bold">A</text>
<rect x="577" y="86.700" width="12" height="13" fill="none" stroke="#505050" stroke-width="1" stroke-dasharray="1 1"/><path d="M576.500 86 h2 v2" fill="#505050"/>
<text x="579.3" y="98" font-size="11.5" fill="#555" font-weight="bold">T</text>
<path d="M607.500 86.500 L611 90.300 H604 Z M614.700 100.300 L618.200 96.500 H611.200 Z" fill="#4a4a4a"/><path d="M606 93 L608.500 95.700 L614.500 90" stroke="#4a4a4a" stroke-width="1.600" fill="none"/>
<use href="#dd" x="621.200" y="92"/>
<path d="M633 80 V104" stroke="#a0a0a0" stroke-width="1" shape-rendering="crispEdges"/><path d="M634 80 V104" stroke="#f6f6f6" stroke-width="1" shape-rendering="crispEdges"/>
<path d="M639.500 80 V104" stroke="#f4f4f4" stroke-width="1"/>
<path d="M643 83.5 H646 M643 85.5 H646 M643 87.5 H646 M643 89.5 H646 M643 91.5 H646 M643 93.5 H646 M643 95.5 H646 M643 97.5 H646 M643 99.5 H646 M643 101.5 H646 " stroke="#a6a6a6" stroke-width="1" shape-rendering="crispEdges"/>
<rect x="789" y="81" width="25.5" height="22.5" fill="url(#dith)" shape-rendering="crispEdges"/><path d="M789.5 103.5 V81.5 H814.5" fill="none" stroke="#a8a8a8" stroke-width="1" shape-rendering="crispEdges"/><path d="M814 81 V103 H789" fill="none" stroke="#ffffff" stroke-width="1" shape-rendering="crispEdges"/>
<text x="653.8" y="97" font-size="10" fill="#3e3e3e" textLength="14.1" lengthAdjust="spacing">M1</text>
<text x="681.8" y="97" font-size="10" fill="#3e3e3e" textLength="14.1" lengthAdjust="spacing">M5</text>
<text x="708.1" y="97" font-size="10" fill="#3e3e3e" textLength="18.9" lengthAdjust="spacing">M15</text>
<text x="735.9" y="97" font-size="10" fill="#3e3e3e" textLength="19.1" lengthAdjust="spacing">M30</text>
<text x="766.8" y="97" font-size="10" fill="#3e3e3e" textLength="13.2" lengthAdjust="spacing">H1</text>
<text x="793.9" y="97" font-size="10" fill="#3e3e3e" textLength="13.7" lengthAdjust="spacing">H4</text>
<text x="823" y="97" font-size="10" fill="#3e3e3e" textLength="13" lengthAdjust="spacing">D1</text>
<text x="850.4" y="97" font-size="10" fill="#3e3e3e" textLength="15.6" lengthAdjust="spacing">W1</text>
<text x="877.1" y="97" font-size="10" fill="#3e3e3e" textLength="15.9" lengthAdjust="spacing">MN</text>
<path d="M901 80 V104" stroke="#a0a0a0" stroke-width="1" shape-rendering="crispEdges"/><path d="M902 80 V104" stroke="#f6f6f6" stroke-width="1" shape-rendering="crispEdges"/>
<text x="19.2" y="710" font-size="10.8" fill="#828078" textLength="64.2" lengthAdjust="spacing">EURUSD,M15</text>
<text x="107.2" y="710" font-size="10.8" fill="#828078" textLength="56.2" lengthAdjust="spacing">GBPUSD,H4</text>
<text x="186.7" y="710" font-size="10.8" fill="#828078" textLength="57.45" lengthAdjust="spacing">AUDUSD,H4</text>
<text x="266" y="710" font-size="10.8" fill="#828078" textLength="53.8" lengthAdjust="spacing">USDJPY,H1</text>
<text x="342.2" y="710" font-size="10.8" fill="#828078" textLength="66.2" lengthAdjust="spacing">GBPCHF,Daily</text>
<text x="429.2" y="710" font-size="10.8" fill="#828078" textLength="63.2" lengthAdjust="spacing">GBPJPY,Daily</text>
<text x="514.2" y="710" font-size="10.8" fill="#828078" textLength="66.2" lengthAdjust="spacing">EURGBP,Daily</text>
<text x="682.2" y="710" font-size="10.8" fill="#828078" textLength="54.2" lengthAdjust="spacing">EURJPY,H4</text>
<text x="759.2" y="710" font-size="10.8" fill="#828078" textLength="67.95" lengthAdjust="spacing">USDCAD,Daily</text>
<text x="602.3" y="710" font-size="10.8" fill="#000" textLength="56.9" lengthAdjust="spacing">NZDUSD,H4</text>
<path d="M96.5 700 V713" stroke="#8c8c8c" stroke-width="1" shape-rendering="crispEdges"/>
<path d="M176.5 700 V713" stroke="#8c8c8c" stroke-width="1" shape-rendering="crispEdges"/>
<path d="M256.5 700 V713" stroke="#8c8c8c" stroke-width="1" shape-rendering="crispEdges"/>
<path d="M332.5 700 V713" stroke="#8c8c8c" stroke-width="1" shape-rendering="crispEdges"/>
<path d="M420.5 700 V713" stroke="#8c8c8c" stroke-width="1" shape-rendering="crispEdges"/>
<path d="M504.5 700 V713" stroke="#8c8c8c" stroke-width="1" shape-rendering="crispEdges"/>
<path d="M748.5 700 V713" stroke="#8c8c8c" stroke-width="1" shape-rendering="crispEdges"/>
<path d="M840.5 700 V713" stroke="#8c8c8c" stroke-width="1" shape-rendering="crispEdges"/>
<path d="M6.500 698 V714" stroke="#9a9a9a" stroke-width="1" shape-rendering="crispEdges"/>
<path d="M1251 703.500 L1247 707 L1251 710.500 Z M1263 703.500 L1267 707 L1263 710.500 Z" fill="#8a8a8a"/>
<text x="6.5" y="733" font-size="11.2" fill="#000" textLength="128.3" lengthAdjust="spacing">Для справки, нажмите F1</text>
<text x="668.75" y="733" font-size="11.2" fill="#000" textLength="86.55" lengthAdjust="spacing">2013.06.21 20:00</text>
<text x="769.5" y="733" font-size="11.2" fill="#000" textLength="48.8" lengthAdjust="spacing">O: 0.7750</text>
<text x="841" y="733" font-size="11.2" fill="#000" textLength="48.3" lengthAdjust="spacing">H: 0.7779</text>
<text x="912.5" y="733" font-size="11.2" fill="#000" textLength="45.3" lengthAdjust="spacing">L: 0.7737</text>
<text x="981.5" y="733" font-size="11.2" fill="#000" textLength="47.8" lengthAdjust="spacing">C: 0.7747</text>
<text x="1052.75" y="733" font-size="11.2" fill="#000" textLength="36.55" lengthAdjust="spacing">V: 2272</text>
<text x="1172.75" y="733" font-size="11.2" fill="#000" textLength="35.3" lengthAdjust="spacing">31/1 kb</text>
<path d="M554.5 720 V737" stroke="#a0a0a0" stroke-width="1" shape-rendering="crispEdges"/><path d="M555.5 720 V737" stroke="#fafafa" stroke-width="1" shape-rendering="crispEdges"/>
<path d="M664 720 V737" stroke="#a0a0a0" stroke-width="1" shape-rendering="crispEdges"/><path d="M665 720 V737" stroke="#fafafa" stroke-width="1" shape-rendering="crispEdges"/>
<path d="M765 720 V737" stroke="#a0a0a0" stroke-width="1" shape-rendering="crispEdges"/><path d="M766 720 V737" stroke="#fafafa" stroke-width="1" shape-rendering="crispEdges"/>
<path d="M836.5 720 V737" stroke="#a0a0a0" stroke-width="1" shape-rendering="crispEdges"/><path d="M837.5 720 V737" stroke="#fafafa" stroke-width="1" shape-rendering="crispEdges"/>
<path d="M907.5 720 V737" stroke="#a0a0a0" stroke-width="1" shape-rendering="crispEdges"/><path d="M908.5 720 V737" stroke="#fafafa" stroke-width="1" shape-rendering="crispEdges"/>
<path d="M977 720 V737" stroke="#a0a0a0" stroke-width="1" shape-rendering="crispEdges"/><path d="M978 720 V737" stroke="#fafafa" stroke-width="1" shape-rendering="crispEdges"/>
<path d="M1047.5 720 V737" stroke="#a0a0a0" stroke-width="1" shape-rendering="crispEdges"/><path d="M1048.5 720 V737" stroke="#fafafa" stroke-width="1" shape-rendering="crispEdges"/>
<path d="M1113.5 720 V737" stroke="#a0a0a0" stroke-width="1" shape-rendering="crispEdges"/><path d="M1114.5 720 V737" stroke="#fafafa" stroke-width="1" shape-rendering="crispEdges"/>
<path d="M1120 723 V735" stroke="#4e8a10" stroke-width="2" shape-rendering="crispEdges"/>
<path d="M1120 732 V735" stroke="#c02020" stroke-width="2" shape-rendering="crispEdges"/>
<path d="M1123 723 V735" stroke="#4e8a10" stroke-width="2" shape-rendering="crispEdges"/>
<path d="M1123 730.9 V735" stroke="#c02020" stroke-width="2" shape-rendering="crispEdges"/>
<path d="M1126 723 V735" stroke="#4e8a10" stroke-width="2" shape-rendering="crispEdges"/>
<path d="M1126 729.8 V735" stroke="#c02020" stroke-width="2" shape-rendering="crispEdges"/>
<path d="M1129 723 V735" stroke="#4e8a10" stroke-width="2" shape-rendering="crispEdges"/>
<path d="M1129 728.7 V735" stroke="#c02020" stroke-width="2" shape-rendering="crispEdges"/>
<path d="M1132 723 V735" stroke="#4e8a10" stroke-width="2" shape-rendering="crispEdges"/>
<path d="M1132 727.6 V735" stroke="#c02020" stroke-width="2" shape-rendering="crispEdges"/>
<path d="M1135 723 V735" stroke="#4e8a10" stroke-width="2" shape-rendering="crispEdges"/>
<path d="M1135 726.5 V735" stroke="#c02020" stroke-width="2" shape-rendering="crispEdges"/>
<path d="M1138 723 V735" stroke="#4e8a10" stroke-width="2" shape-rendering="crispEdges"/>
<path d="M1138 725.4 V735" stroke="#c02020" stroke-width="2" shape-rendering="crispEdges"/>
<path d="M1141 723 V735" stroke="#4e8a10" stroke-width="2" shape-rendering="crispEdges"/>
<path d="M1141 724.3 V735" stroke="#c02020" stroke-width="2" shape-rendering="crispEdges"/>
<path d="M1262 737 L1273 726 M1266 737 L1273 730 M1270 737 L1273 734" stroke="#a8a8a8" stroke-width="1.200"/>
</svg>
</body>
</html>
